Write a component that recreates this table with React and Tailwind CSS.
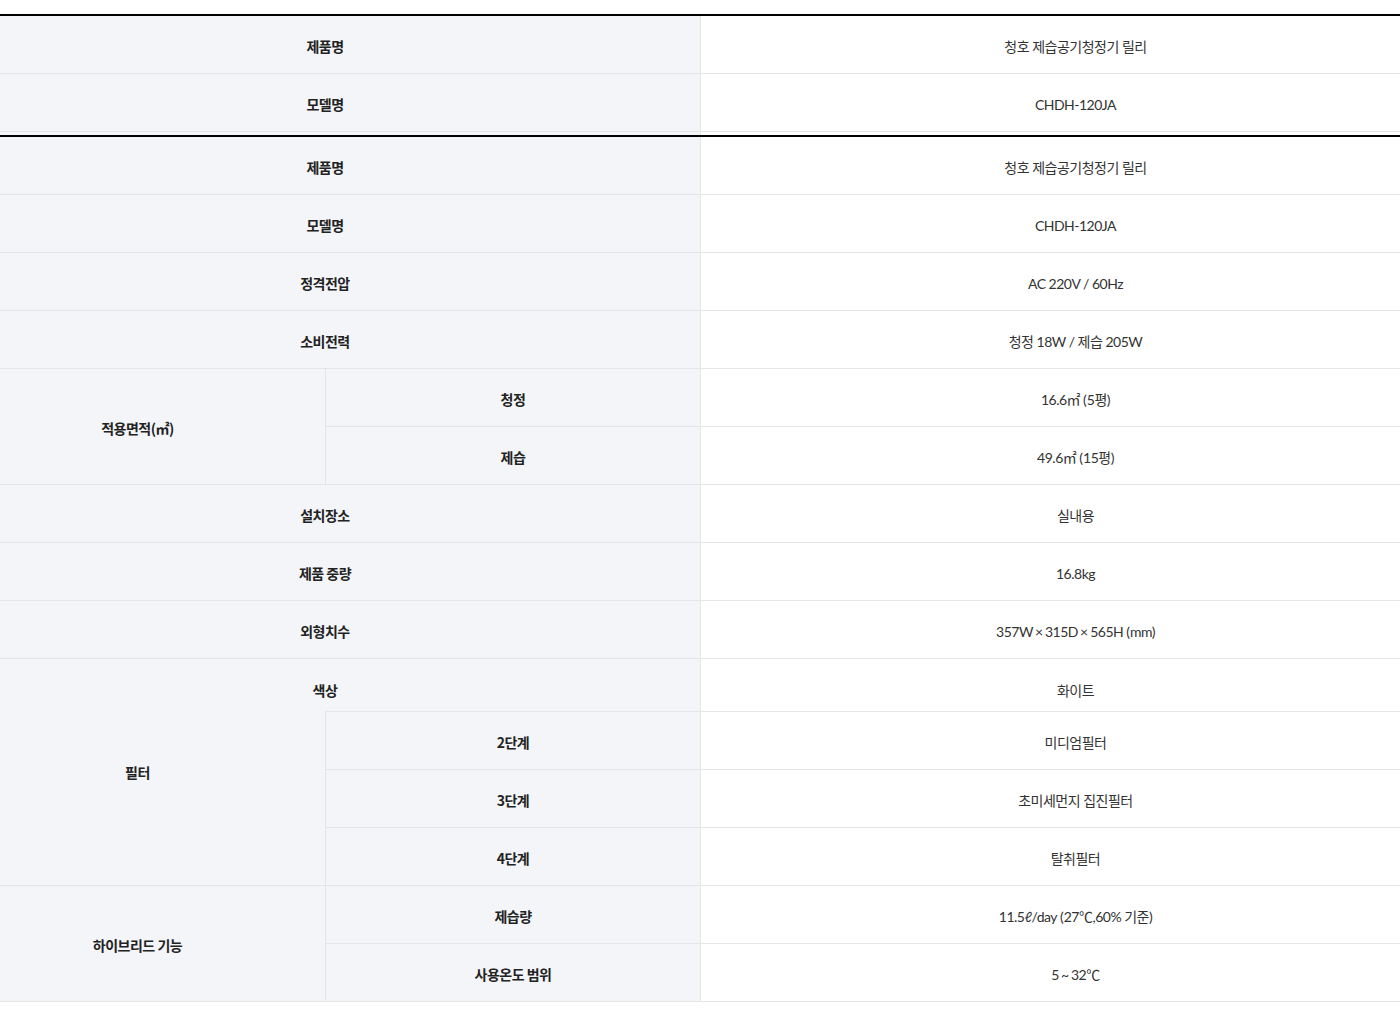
import React from "react";

const SPLIT = /([\uAC00-\uD7A3\u3131-\u318E]+|[×~]|\()/;
const HANGUL = /^[\uAC00-\uD7A3\u3131-\u318E]+$/;

function Val({ text }) {
  const parts = text.split(SPLIT).filter((p) => p !== "");
  return (
    <span>
      {parts.map((p, i) => {
        if (HANGUL.test(p)) return <span key={i} className="tracking-[-0.5px]">{p}</span>;
        if (p === "×" || p === "~") return <span key={i} className="mx-[2px]">{p}</span>;
        if (p === "(") return <span key={i} className="ml-[3px]">{p}</span>;
        return <span key={i} className="tracking-[-0.5px]">{p}</span>;
      })}
    </span>
  );
}

const head =
  "bg-[#f4f5f9] flex items-center justify-center pt-[4px] border-b border-[#e5e5e5] font-['Noto_Sans_CJK_KR',sans-serif] font-bold text-[14px] text-[#222] tracking-[-0.5px]";
const headSpan =
  "bg-[#f4f5f9] flex items-center justify-center border-b border-[#e5e5e5] font-['Noto_Sans_CJK_KR',sans-serif] font-bold text-[14px] text-[#222] tracking-[-0.5px]";
const val =
  "bg-white flex items-center justify-center pt-[4px] border-b border-l border-[#e5e5e5] pl-[50px] text-[14px] text-[#333] font-[Lato,'Noto_Sans_CJK_KR',sans-serif]";

export default function App() {
  return (
    <div className="w-[1400px] min-h-[1030px] bg-white pt-[14px]">
      {/* first table */}
      <div className="grid grid-cols-[700px_1fr] grid-rows-[58px_58px_3px] border-t-2 border-black">
        <div className={head + " pr-[50px]"}>제품명</div>
        <div className={val}><Val text="청호 제습공기청정기 릴리" /></div>
        <div className={head + " pr-[50px]"}>모델명</div>
        <div className={val}><Val text="CHDH-120JA" /></div>
        <div className="bg-[#f4f5f9]"></div>
        <div className="bg-white border-l border-[#e5e5e5]"></div>
      </div>

      {/* second table */}
      <div className="grid grid-cols-[325px_375px_1fr] grid-rows-[58px_58px_58px_58px_58px_58px_58px_58px_58px_52px_59px_58px_58px_58px_58px] border-t-2 border-black">
        <div className={head + " col-start-1 col-span-2 row-start-1 pr-[50px]"}>제품명</div>
        <div className={val + " col-start-3 row-start-1"}><Val text="청호 제습공기청정기 릴리" /></div>

        <div className={head + " col-start-1 col-span-2 row-start-2 pr-[50px]"}>모델명</div>
        <div className={val + " col-start-3 row-start-2"}><Val text="CHDH-120JA" /></div>

        <div className={head + " col-start-1 col-span-2 row-start-3 pr-[50px]"}>정격전압</div>
        <div className={val + " col-start-3 row-start-3"}><Val text="AC 220V / 60Hz" /></div>

        <div className={head + " col-start-1 col-span-2 row-start-4 pr-[50px]"}>소비전력</div>
        <div className={val + " col-start-3 row-start-4"}><Val text="청정 18W / 제습 205W" /></div>

        <div className={head + " col-start-1 row-start-5 row-span-2 pr-[50px]"}>적용면적(㎡)</div>
        <div className={head + " col-start-2 row-start-5 border-l"}>청정</div>
        <div className={val + " col-start-3 row-start-5"}><Val text="16.6㎡(5평)" /></div>
        <div className={head + " col-start-2 row-start-6 border-l"}>제습</div>
        <div className={val + " col-start-3 row-start-6"}><Val text="49.6㎡(15평)" /></div>

        <div className={head + " col-start-1 col-span-2 row-start-7 pr-[50px]"}>설치장소</div>
        <div className={val + " col-start-3 row-start-7"}><Val text="실내용" /></div>

        <div className={head + " col-start-1 col-span-2 row-start-8 pr-[50px]"}>제품 중량</div>
        <div className={val + " col-start-3 row-start-8"}><Val text="16.8kg" /></div>

        <div className={head + " col-start-1 col-span-2 row-start-9 pr-[50px]"}>외형치수</div>
        <div className={val + " col-start-3 row-start-9"}><Val text="357W×315D×565H(mm)" /></div>

        <div className={headSpan + " col-start-1 row-start-10 row-span-4 pr-[50px]"}>필터</div>
        <div className="col-start-1 col-span-2 row-start-10 bg-[#f4f5f9] flex items-center justify-center pt-[11px] pr-[50px] font-['Noto_Sans_CJK_KR',sans-serif] font-bold text-[14px] text-[#222] tracking-[-0.5px]">색상</div>
        <div className="col-start-3 row-start-10 bg-white flex items-center justify-center pt-[11px] border-l border-[#e5e5e5] pl-[50px] text-[14px] text-[#333] font-[Lato,'Noto_Sans_CJK_KR',sans-serif]"><Val text="화이트" /></div>
        <div className={head + " col-start-2 row-start-11 border-l border-t"}>2단계</div>
        <div className={val + " col-start-3 row-start-11 border-t"}><Val text="미디엄필터" /></div>
        <div className={head + " col-start-2 row-start-12 border-l"}>3단계</div>
        <div className={val + " col-start-3 row-start-12"}><Val text="초미세먼지 집진필터" /></div>
        <div className={head + " col-start-2 row-start-13 border-l"}>4단계</div>
        <div className={val + " col-start-3 row-start-13"}><Val text="탈취필터" /></div>

        <div className={head + " col-start-1 row-start-14 row-span-2 pr-[50px]"}>하이브리드 기능</div>
        <div className={head + " col-start-2 row-start-14 border-l"}>제습량</div>
        <div className={val + " col-start-3 row-start-14"}><Val text="11.5ℓ/day(27℃,60% 기준)" /></div>
        <div className={head + " col-start-2 row-start-15 border-l"}>사용온도 범위</div>
        <div className={val + " col-start-3 row-start-15"}><Val text="5~32℃" /></div>
      </div>
    </div>
  );
}
